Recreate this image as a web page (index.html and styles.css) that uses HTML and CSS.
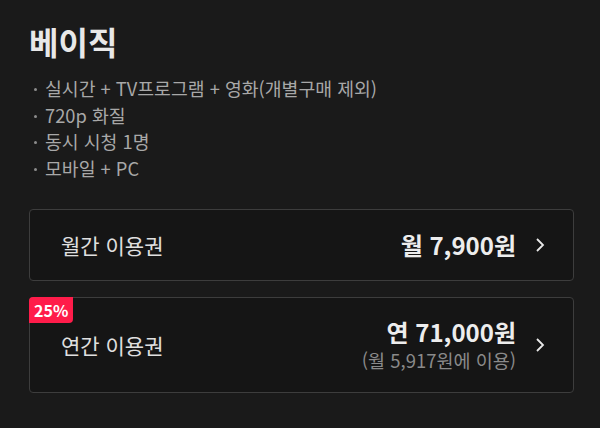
FILE: index.html
```html
<!DOCTYPE html>
<html lang="ko">
<head>
    <meta charset="UTF-8">
    <meta name="viewport" content="width=device-width, initial-scale=1.0">
    <title>베이직 이용권</title>
    <link rel="stylesheet" href="styles.css">
</head>
<body>
    <div class="plan">
        <h1 class="plan-title">베이직</h1>

        <ul class="features">
            <li>실시간 + TV프로그램 + 영화(개별구매 제외)</li>
            <li>720p 화질</li>
            <li>동시 시청 1명</li>
            <li>모바일 + PC</li>
        </ul>

        <a class="ticket monthly" href="#">
            <span class="ticket-name">월간 이용권</span>
            <span class="ticket-price">
                <strong>월 7,900원</strong>
            </span>
            <svg class="chevron" width="10" height="16" viewBox="0 0 10 16">
                <polyline points="2,2 8,8 2,14" fill="none" stroke="#e8e8e8" stroke-width="1.8"/>
            </svg>
        </a>

        <a class="ticket yearly" href="#">
            <span class="badge">25%</span>
            <span class="ticket-name">연간 이용권</span>
            <span class="ticket-price">
                <strong>연 71,000원</strong>
                <small>(월 5,917원에 이용)</small>
            </span>
            <svg class="chevron" width="10" height="16" viewBox="0 0 10 16">
                <polyline points="2,2 8,8 2,14" fill="none" stroke="#e8e8e8" stroke-width="1.8"/>
            </svg>
        </a>
    </div>
</body>
</html>
```

FILE: styles.css
```css
body {
    margin: 0;
    background: #1a1a1a;
    color: #e6e6e6;
    font-family: 'Noto Sans CJK KR', 'Noto Sans', sans-serif;
}
.plan {
    padding: 21px 26px 0 29px;
}
.plan-title {
    margin: 0;
    font-size: 32px;
    line-height: 40px;
    font-weight: 700;
    color: #e8e8e8;
}
.features {
    list-style: none;
    margin: 14px 0 0;
    padding: 0;
    color: #a8a8a8;
    font-size: 18.3px;
    line-height: 26.7px;
}
.features li {
    position: relative;
    padding-left: 16px;
}
.features li::before {
    content: '';
    position: absolute;
    left: 5px;
    top: 13px;
    width: 3px;
    height: 3px;
    border-radius: 50%;
    background: #8c8c8c;
}
.ticket {
    position: relative;
    display: flex;
    align-items: center;
    box-sizing: border-box;
    padding: 0 28px 0 31px;
    border: 1px solid #3d3d3d;
    border-radius: 4px;
    background: #151515;
    color: #e6e6e6;
    text-decoration: none;
}
.monthly {
    margin-top: 27px;
    height: 72px;
}
.yearly {
    margin-top: 16px;
    height: 96px;
}
.ticket-name {
    flex: 1;
    font-size: 21px;
    color: #e0e0e0;
}
.ticket-price {
    display: flex;
    flex-direction: column;
    align-items: flex-end;
    margin-right: 19px;
}
.ticket-price strong {
    font-size: 24px;
    line-height: 30px;
    font-weight: 700;
    color: #ededed;
}
.ticket-price small {
    font-size: 18.5px;
    line-height: 26px;
    color: #8a8a8a;
}
.chevron {
    display: block;
}
.badge {
    position: absolute;
    left: -1px;
    top: -1px;
    padding: 0 5px;
    height: 26px;
    line-height: 26px;
    border-radius: 4px 0 4px 0;
    background: #ff1c4a;
    color: #fff;
    font-size: 16px;
    font-weight: 700;
}
```
